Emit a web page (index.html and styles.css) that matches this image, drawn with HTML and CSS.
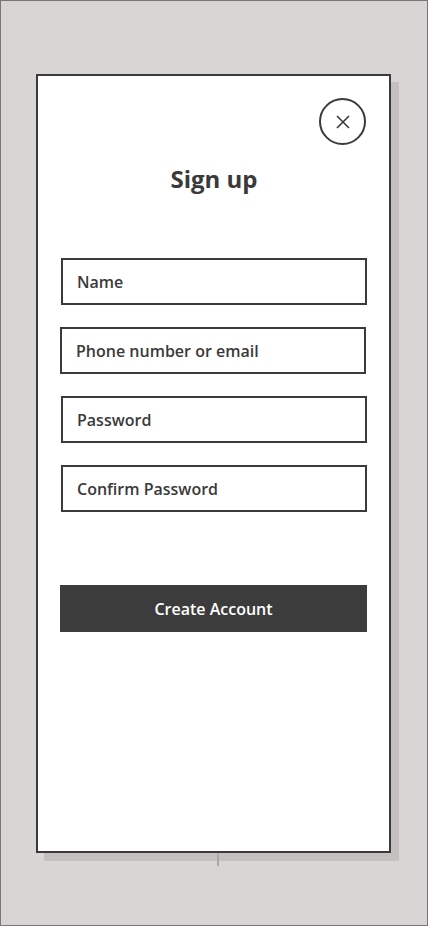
FILE: index.html
```html
<!DOCTYPE html>
<html>
<head>
<meta charset="utf-8">
<link rel="stylesheet" href="styles.css">
</head>
<body>
<div class="frame">
  <div class="card">
    <div class="head">
      <button class="close" aria-label="Close">
        <svg width="14" height="14" viewBox="0 0 14 14"><path d="M1 1L13 13M13 1L1 13" stroke="#3a3a3a" stroke-width="1.6" fill="none"/></svg>
      </button>
    </div>
    <h1 class="title">Sign up</h1>
    <div class="fields">
      <div class="field">Name</div>
      <div class="field shift">Phone number or email</div>
      <div class="field">Password</div>
      <div class="field">Confirm Password</div>
    </div>
    <button class="submit">Create Account</button>
  </div>
  <div class="tick"></div>
</div>
</body>
</html>
```
FILE: styles.css
```css
html, body {
  margin: 0;
  padding: 0;
}
body {
  font-family: "Open Sans", "Noto Sans", sans-serif;
  color: #3a3a3a;
}
.frame {
  box-sizing: border-box;
  width: 428px;
  height: 926px;
  border: 1px solid #777;
  background: #dad5d5;
  padding-top: 73px;
  padding-left: 35px;
}
.card {
  box-sizing: border-box;
  width: 355px;
  height: 779px;
  background: #fff;
  border: 2px solid #3a3a3a;
  box-shadow: 8px 8px 0 #c4c0c0;
  padding: 22px 22px 0 23px;
  display: flex;
  flex-direction: column;
}
.head {
  display: flex;
  justify-content: flex-end;
}
.close {
  box-sizing: border-box;
  width: 47px;
  height: 47px;
  margin-right: 1px;
  border-radius: 50%;
  border: 2px solid #3a3a3a;
  background: #fff;
  padding: 0;
  display: flex;
  align-items: center;
  justify-content: center;
}
.title {
  margin: 17px 0 0 0;
  text-align: center;
  font-size: 24px;
  line-height: 33px;
  font-weight: 700;
  color: #3a3a3a;
}
.fields {
  margin-top: 63px;
  display: flex;
  flex-direction: column;
  gap: 22px;
}
.field {
  box-sizing: border-box;
  width: 306px;
  height: 47px;
  border: 2px solid #3a3a3a;
  padding-left: 14px;
  display: flex;
  align-items: center;
  font-size: 16px;
  font-weight: 600;
  color: #3a3a3a;
}
.field.shift {
  margin-left: -1px;
}
.submit {
  margin-top: 73px;
  margin-left: -1px;
  width: 307px;
  height: 47px;
  border: none;
  background: #3c3c3c;
  color: #fff;
  font-family: "Open Sans", "Noto Sans", sans-serif;
  font-size: 16px;
  font-weight: 600;
  padding: 0;
}
.tick {
  width: 2px;
  height: 13px;
  margin-left: 181px;
  background: #aaa6a6;
}
```
